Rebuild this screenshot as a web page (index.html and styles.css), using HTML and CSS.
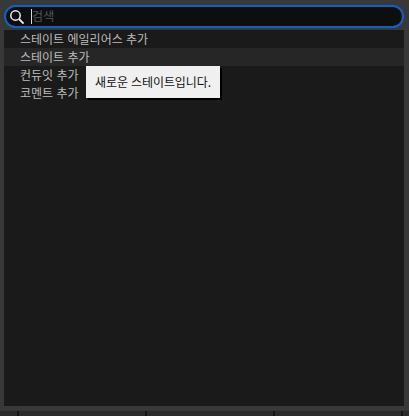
FILE: index.html
```html
<!DOCTYPE html>
<html lang="ko">
<head>
<meta charset="utf-8">
<title>검색</title>
<link rel="stylesheet" href="styles.css">
</head>
<body>
<div class="window">
  <div class="search">
    <svg class="search-icon" width="16" height="16" viewBox="0 0 16 16" aria-hidden="true">
      <circle cx="6.5" cy="6.5" r="4.7" fill="none" stroke="#eeeeee" stroke-width="1.5"/>
      <path d="M10 10 L14.6 14.6" stroke="#eeeeee" stroke-width="1.8" fill="none"/>
    </svg>
    <span class="caret"></span>
    <span class="placeholder">검색</span>
  </div>
  <ul class="list">
    <li class="item">스테이트 에일리어스 추가</li>
    <li class="item item-hover">스테이트 추가</li>
    <li class="item">컨듀잇 추가</li>
    <li class="item">코멘트 추가</li>
  </ul>
  <div class="tooltip">새로운 스테이트입니다.</div>
</div>
<div class="footer">
  <span class="tick"></span><span class="tick"></span><span class="tick"></span><span class="tick"></span>
</div>
</body>
</html>
```
FILE: styles.css
```css
html, body {
  margin: 0;
  padding: 0;
  width: 409px;
  height: 416px;
  overflow: hidden;
  background: #383838;
  font-family: "Noto Sans CJK KR", "Liberation Sans", sans-serif;
}
.window {
  position: relative;
  height: 406px;
  padding: 5px 5px 0 4px;
  box-sizing: border-box;
  display: flex;
  flex-direction: column;
  gap: 2px;
}
.search {
  height: 23px;
  box-sizing: border-box;
  border: 2px solid #0f62c4;
  border-radius: 12px;
  background: #0e0e0e;
  display: flex;
  align-items: center;
  padding-left: 3px;
  flex: none;
}
.search-icon { flex: none; }
.caret {
  width: 1px;
  height: 15px;
  background: #d8d8d8;
  margin-left: 6px;
  flex: none;
}
.placeholder {
  font-size: 12px;
  line-height: 16px;
  color: #555555;
  margin-top: -1px;
  letter-spacing: 0.3px;
}
.list {
  list-style: none;
  margin: 0;
  padding: 0;
  flex: 1;
  background: #1a1a1a;
}
.item {
  height: 18px;
  line-height: 17px;
  padding-left: 16px;
  font-size: 12px;
  color: #bcbcbc;
}
.item-hover { background: #262626; }
.tooltip {
  position: absolute;
  left: 86px;
  top: 66px;
  width: 134px;
  height: 32px;
  line-height: 32px;
  box-sizing: border-box;
  padding-left: 9px;
  font-size: 12px;
  letter-spacing: -0.1px;
  color: #111111;
  background: #f0f0f0;
  box-shadow: 2px 2px 0 #000000;
}
.footer {
  margin-top: 5px;
  height: 5px;
  background: #2c2c2c;
  display: flex;
  gap: 126px;
  padding-left: 17px;
}
.tick {
  width: 2px;
  height: 5px;
  background: #161616;
  flex: none;
}
```
